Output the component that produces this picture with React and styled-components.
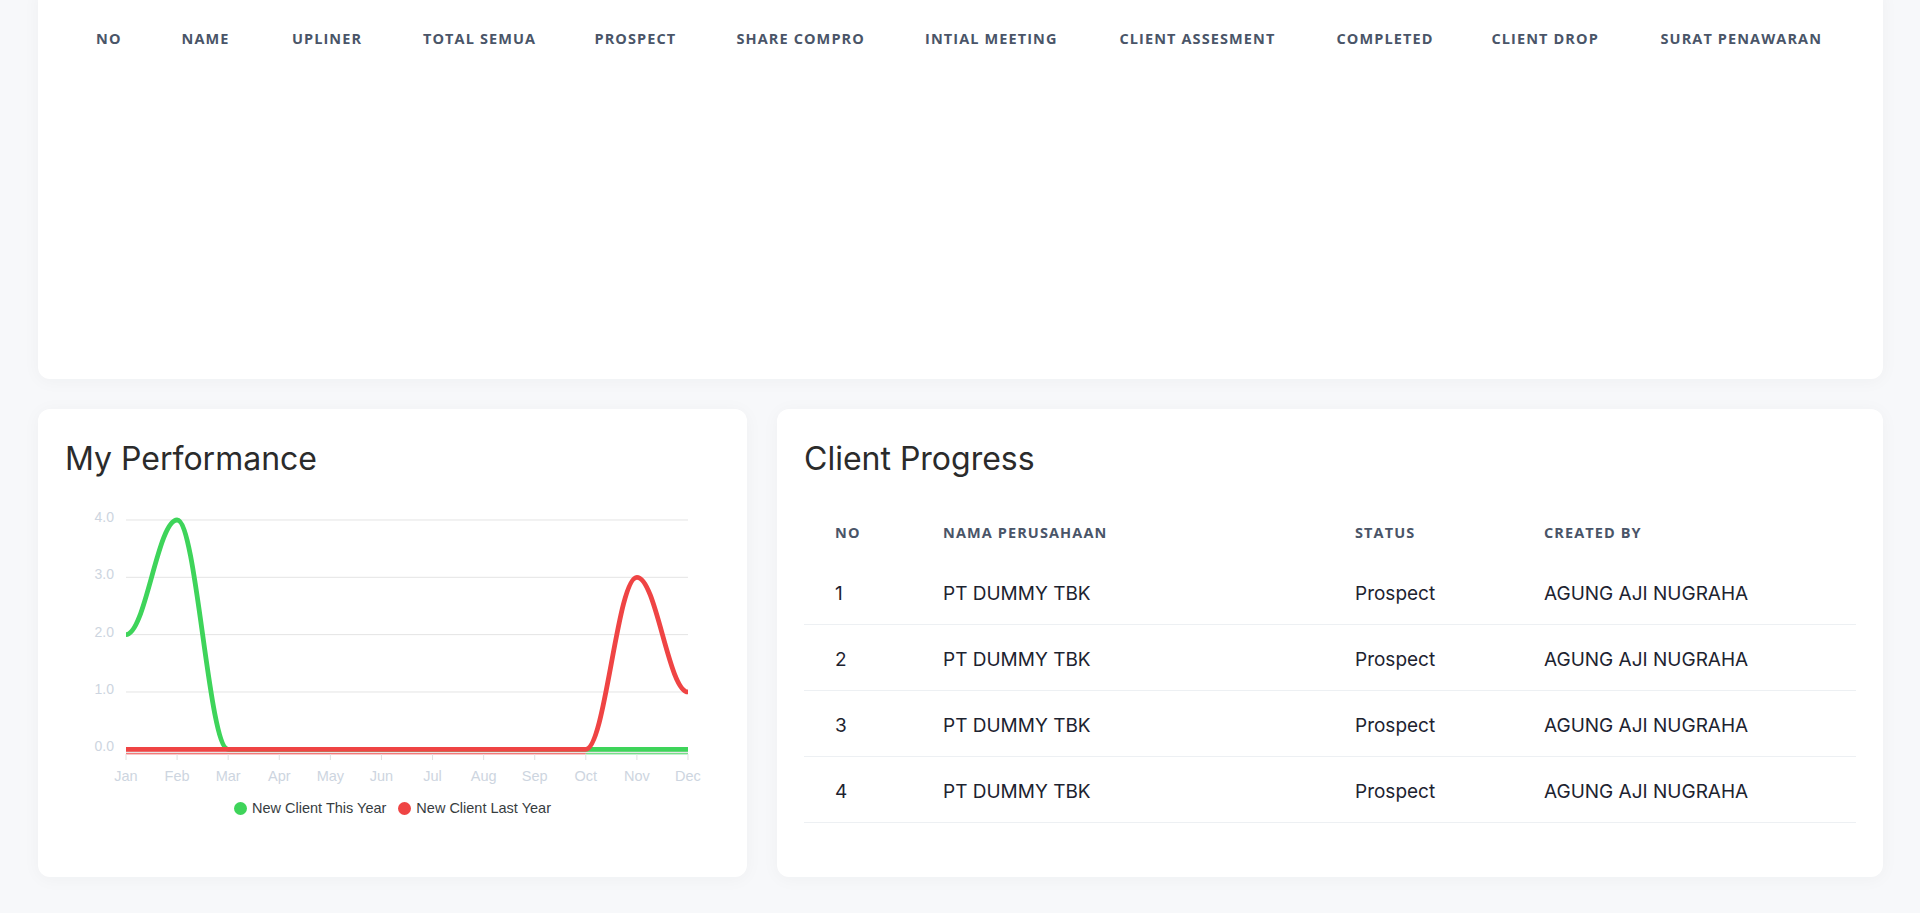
import React from "react";
import styled, { createGlobalStyle } from "styled-components";

const GlobalStyle = createGlobalStyle`
  body {
    margin: 0;
    background: #f7f8fa;
    font-family: "Inter", "Open Sans", sans-serif;
  }
`;

const Page = styled.div`
  margin-top: -12px;
  padding: 0 37px 36px 38px;
  display: flex;
  flex-direction: column;
  gap: 30px;
`;

const Card = styled.section`
  box-sizing: border-box;
  background: #fff;
  border-radius: 12px;
  box-shadow: 0 2px 18px rgba(30, 40, 60, 0.04);
  padding: 27px;
  min-height: ${(p) => p.$minHeight || "auto"};
`;

const BottomRow = styled.div`
  display: grid;
  grid-template-columns: 709px 1fr;
  gap: 30px;
`;

const Title = styled.h2`
  margin: 0 0 ${(p) => p.$gap || 18}px;
  font-family: "Inter", sans-serif;
  font-weight: 400;
  font-size: 32px;
  line-height: 46px;
  color: #2b2b2b;
`;

const Table = styled.table`
  width: 100%;
  border-collapse: collapse;
  table-layout: fixed;
`;

const Th = styled.th`
  text-align: left;
  padding: 14px 0 16px 31px;
  font-family: "Open Sans", sans-serif;
  font-weight: 700;
  font-size: 14.5px;
  line-height: 20px;
  letter-spacing: 1.1px;
  text-transform: uppercase;
  color: #4a5568;
  white-space: nowrap;
`;

const Td = styled.td`
  height: 62px;
  padding: 3px 0 0 31px;
  border-bottom: 1px solid #edf0f3;
  font-family: "Inter", sans-serif;
  font-size: 19px;
  color: #1d2330;
  white-space: nowrap;
`;

const ChartBox = styled.div`
  height: 350px;
  display: flex;
  flex-direction: column;
`;

const Legend = styled.div`
  margin-top: 8px;
  display: flex;
  justify-content: center;
  gap: 12px;
  font-family: "Liberation Sans", Arial, sans-serif;
  font-size: 14.5px;
  line-height: 20px;
  color: #373d3f;
`;

const LegendItem = styled.div`
  display: flex;
  align-items: center;
  gap: 5px;
`;

const Dot = styled.span`
  width: 13px;
  height: 13px;
  border-radius: 50%;
  background: ${(p) => p.$color};
`;

const topCols = [
  ["No", 85.5],
  ["Name", 110.4],
  ["Upliner", 131.1],
  ["Total Semua", 171.5],
  ["Prospect", 142],
  ["Share Compro", 188.5],
  ["Intial Meeting", 194.5],
  ["Client Assesment", 217],
  ["Completed", 155],
  ["Client Drop", 169],
  ["Surat Penawaran", null],
];

const progressCols = [
  ["No", 108],
  ["Nama Perusahaan", 412],
  ["Status", 189],
  ["Created By", null],
];

const rows = [1, 2, 3, 4].map((n) => ({
  no: n,
  company: "PT DUMMY TBK",
  status: "Prospect",
  by: "AGUNG AJI NUGRAHA",
}));

const months = ["Jan", "Feb", "Mar", "Apr", "May", "Jun", "Jul", "Aug", "Sep", "Oct", "Nov", "Dec"];
const GREEN = "#3ed45a";
const RED = "#ef4444";
const thisYear = [2, 4, 0, 0, 0, 0, 0, 0, 0, 0, 0, 0];
const lastYear = [0, 0, 0, 0, 0, 0, 0, 0, 0, 0, 3, 1];

const X0 = 61;
const STEP = 51.09;
const Y0 = 249.3;
const UNIT = 57.33;
const px = (i) => X0 + i * STEP;
const py = (v) => Y0 - v * UNIT;

// smooth line: every point has a flat tangent
const smoothPath = (data) => {
  let d = `M${px(0)},${py(data[0])}`;
  for (let i = 1; i < data.length; i++) {
    const x0 = px(i - 1), x1 = px(i);
    const len = (x1 - x0) * 0.38;
    d += ` C${x0 + len},${py(data[i - 1])} ${x1 - len},${py(data[i])} ${x1},${py(data[i])}`;
  }
  return d;
};

const PerformanceChart = () => (
  <svg width="655" height="290" viewBox="0 0 655 290">
    {[0, 1, 2, 3, 4].map((v) => (
      <g key={v}>
        <line x1={X0} x2={px(11)} y1={py(v)} y2={py(v)} stroke="#e4e4e4" strokeWidth="1" />
        <text x="49" y={py(v) + 2} textAnchor="end" fontFamily="Liberation Sans, Arial, sans-serif" fontSize="14" fill="#cdd5e0">
          {v.toFixed(1)}
        </text>
      </g>
    ))}
    <rect x={X0} y={py(0) + 1} width={px(11) - X0} height="3" fill="#e6e6e6" />
    <line x1={X0} x2={px(9)} y1="253.8" y2="253.8" stroke={RED} strokeWidth="1" />
    <line x1={px(9)} x2={px(11)} y1="253.8" y2="253.8" stroke={GREEN} strokeWidth="1" />
    {months.map((m, i) => (
      <g key={m}>
        <line x1={px(i)} x2={px(i)} y1="254" y2="260" stroke="#e0e0e0" strokeWidth="1" />
        <text x={px(i)} y="281" textAnchor="middle" fontFamily="Liberation Sans, Arial, sans-serif" fontSize="14.5" fill="#cdd5e0">
          {m}
        </text>
      </g>
    ))}
    <path d={smoothPath(thisYear)} fill="none" stroke={GREEN} strokeWidth="4.8" />
    <path d={smoothPath(lastYear)} fill="none" stroke={RED} strokeWidth="4.8" />
  </svg>
);

const App = () => (
  <>
    <GlobalStyle />
    <Page>
      <Card $minHeight="391px">
        <Table>
          <colgroup>
            {topCols.map(([name, w]) => (
              <col key={name} style={w ? { width: w } : undefined} />
            ))}
          </colgroup>
          <thead>
            <tr>
              {topCols.map(([name]) => (
                <Th key={name}>{name}</Th>
              ))}
            </tr>
          </thead>
          <tbody />
        </Table>
      </Card>

      <BottomRow>
        <Card>
          <Title>My Performance</Title>
          <ChartBox>
            <PerformanceChart />
            <Legend>
              <LegendItem>
                <Dot $color={GREEN} />
                New Client This Year
              </LegendItem>
              <LegendItem>
                <Dot $color={RED} />
                New Client Last Year
              </LegendItem>
            </Legend>
          </ChartBox>
        </Card>

        <Card>
          <Title $gap={27}>Client Progress</Title>
          <Table>
            <colgroup>
              {progressCols.map(([name, w]) => (
                <col key={name} style={w ? { width: w } : undefined} />
              ))}
            </colgroup>
            <thead>
              <tr>
                {progressCols.map(([name]) => (
                  <Th key={name}>{name}</Th>
                ))}
              </tr>
            </thead>
            <tbody>
              {rows.map((r) => (
                <tr key={r.no}>
                  <Td>{r.no}</Td>
                  <Td>{r.company}</Td>
                  <Td>{r.status}</Td>
                  <Td>{r.by}</Td>
                </tr>
              ))}
            </tbody>
          </Table>
        </Card>
      </BottomRow>
    </Page>
  </>
);

export default App;
